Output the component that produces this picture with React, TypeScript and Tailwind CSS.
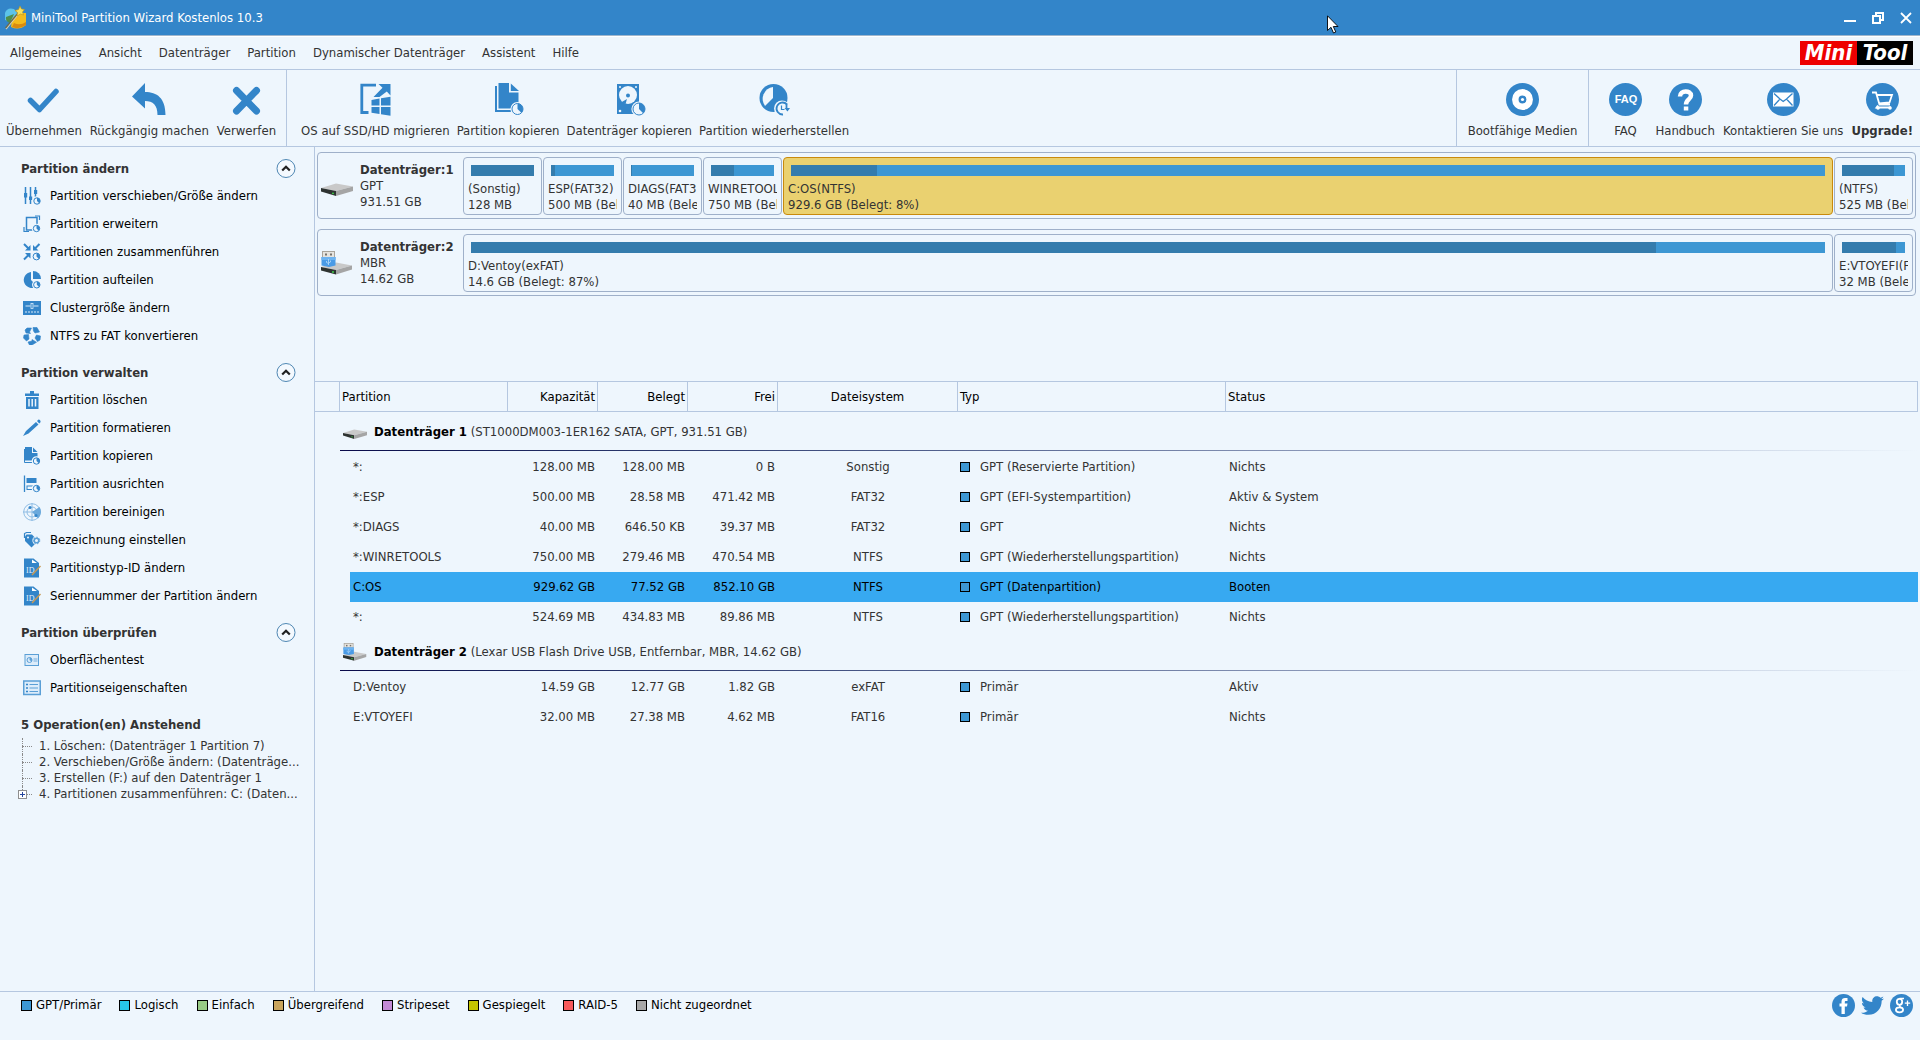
import React, { ReactNode } from "react";
import { FaTwitter } from "react-icons/fa";

const BLUE = "#3385c9";
const PAGE = "#eef6fd";

/* ---------- shared drawings ---------- */

function PieBadge({ cx, cy, r }: { cx: number; cy: number; r: number }) {
  return (
    <g>
      <circle cx={cx} cy={cy} r={r + 1.6} fill={PAGE} />
      <circle cx={cx} cy={cy} r={r} fill={PAGE} stroke={BLUE} strokeWidth="1" />
      <path
        d={`M${cx} ${cy}V${cy - r}A${r} ${r} 0 0 1 ${cx + r * 0.7} ${cy + r * 0.7}Z`}
        fill={BLUE}
      />
    </g>
  );
}

function HardDisk({ className }: { className: string }) {
  return (
    <svg viewBox="0 0 32 13" className={className} aria-hidden="true">
      <path d="M0 5L15 0.5L32 3.5L15 8Z" fill="#c9c9c9" />
      <path d="M0 5L15 8V13L0 8.5Z" fill="#2e3331" />
      <path d="M15 8L32 3.5V8L15 13Z" fill="#a5a5a5" />
      <circle cx="12" cy="10.3" r="0.9" fill="#3fe04a" />
    </svg>
  );
}

function UsbDisk({ className }: { className: string }) {
  return (
    <svg viewBox="0 0 32 24" className={className} aria-hidden="true">
      <path d="M0 16L15 11.5L31 14.5L15 19Z" fill="#c9c9c9" />
      <path d="M0 16L15 19V23.5L0 19.5Z" fill="#2e3331" />
      <path d="M15 19L31 14.5V18.5L15 23.5Z" fill="#a5a5a5" />
      <circle cx="12" cy="21" r="0.9" fill="#3fe04a" />
      <rect x="1.5" y="0.5" width="12" height="6" fill="#e6e4df" stroke="#a9a49b" />
      <rect x="4" y="2.5" width="2" height="2" fill="#77736c" />
      <rect x="9" y="2.5" width="2" height="2" fill="#77736c" />
      <path d="M0.5 6H14.5V14.5L8 16L0.5 14.5Z" fill="#4a9be6" />
      <path d="M0.5 6H14.5V9H0.5Z" fill="#6db3f0" />
      <path d="M7.5 8V14M5.5 10V11.5L7.5 12.5M9.5 9.5V11L7.5 12" stroke="#b5dafa" fill="none" strokeWidth="0.8" />
    </svg>
  );
}

function Round({ children }: { children: ReactNode }) {
  return (
    <svg viewBox="0 0 33 33" className="size-[33px]" aria-hidden="true">
      <circle cx="16.5" cy="16.5" r="16.5" fill={BLUE} />
      {children}
    </svg>
  );
}

/* ---------- toolbar icons ---------- */

const tool: Record<string, ReactNode> = {
  check: (
    <svg viewBox="0 0 33 33" className="size-[33px]" aria-hidden="true">
      <path d="M3.5 17.5L12.5 26.5L29 8.5" fill="none" stroke={BLUE} strokeWidth="5.5" strokeLinecap="round" strokeLinejoin="round" />
    </svg>
  ),
  undo: (
    <svg viewBox="0 0 34 33" className="h-[33px] w-[34px]" aria-hidden="true">
      <path d="M0 13.5L13 0V9C25 9 33.5 15 33.5 32H25.5C25.5 22 21 18 13 18V25.5Z" fill={BLUE} />
    </svg>
  ),
  discard: (
    <svg viewBox="0 0 33 33" className="size-[33px]" aria-hidden="true">
      <path d="M6.5 7.5L26.5 28M26.5 7.5L6.5 28" fill="none" stroke={BLUE} strokeWidth="7" strokeLinecap="round" />
    </svg>
  ),
  migrate: (
    <svg viewBox="0 0 33 33" className="size-[33px]" aria-hidden="true">
      <path d="M17 2.2H2.8V29.5H9.5" fill="none" stroke={BLUE} strokeWidth="2.8" />
      <path d="M19.5 1H31.5V12.5L27.8 8.5L20.5 14L14.5 14L23.5 4.8Z" fill={BLUE} />
      <path d="M12.5 17L20.5 15.5V22.5H12.5ZM22 15.3L31.5 13.8V22.5H22ZM12.5 24H20.5V31L12.5 29.8ZM22 24H31.5V32.7L22 31.2Z" fill={BLUE} />
    </svg>
  ),
  copyPartition: (
    <svg viewBox="0 0 33 33" className="size-[33px]" aria-hidden="true">
      <path d="M6.5 0H17V9.5H26.5V25.5H6.5Z" fill={BLUE} />
      <path d="M18.8 0.5L27 8H18.8Z" fill={BLUE} />
      <path d="M4 3V28H22" fill="none" stroke={BLUE} strokeWidth="2" />
      <PieBadge cx={25.5} cy={26} r={5.5} />
    </svg>
  ),
  copyDisk: (
    <svg viewBox="0 0 33 33" className="size-[33px]" aria-hidden="true">
      <rect x="4" y="1" width="22" height="30" fill={BLUE} />
      <circle cx="15" cy="12" r="9" fill={PAGE} />
      <circle cx="15" cy="12.5" r="2" fill={BLUE} />
      <path d="M7 20L14 16L12.5 21Z" fill={BLUE} />
      <circle cx="7" cy="4" r="1" fill={PAGE} />
      <circle cx="23" cy="4" r="1" fill={PAGE} />
      <circle cx="7" cy="28" r="1.3" fill={PAGE} />
      <PieBadge cx={26} cy={26} r={6} />
    </svg>
  ),
  recover: (
    <svg viewBox="0 0 33 33" className="size-[33px]" aria-hidden="true">
      <circle cx="15.5" cy="15" r="14" fill={BLUE} />
      <path d="M15 4V15L7 23A12 12 0 0 1 15 4Z" fill={PAGE} />
      <circle cx="24" cy="25.5" r="8" fill={PAGE} />
      <path d="M29 21.5A6 6 0 1 0 25 31.5" fill="none" stroke={BLUE} strokeWidth="1.8" />
      <path d="M26.5 25H32L29.5 28.5Z" fill={BLUE} />
      <path d="M23.5 22.5V26.5H26.5" fill="none" stroke={BLUE} strokeWidth="1.2" />
      <path d="M28.5 20.5V25" stroke={BLUE} strokeWidth="1.8" />
    </svg>
  ),
  disc: (
    <Round>
      <circle cx="16.5" cy="16.5" r="7.2" fill="none" stroke="#fff" strokeWidth="6.5" />
      <circle cx="16.5" cy="16.5" r="1.6" fill="#fff" />
    </Round>
  ),
  faq: (
    <Round>
      <text x="17" y="20" textAnchor="middle" fill="#fff" fontSize="11" fontWeight="700" fontFamily="Liberation Sans, sans-serif">FAQ</text>
    </Round>
  ),
  help: (
    <Round>
      <path d="M11 13.5C11 7 22 7 22 12.5C22 16.5 17 16.5 17 21.5" fill="none" stroke="#fff" strokeWidth="4.5" />
      <rect x="14.8" y="23.5" width="4.5" height="4" fill="#fff" />
    </Round>
  ),
  mail: (
    <Round>
      <rect x="6" y="9.5" width="20.5" height="14" fill="#fff" />
      <path d="M7 10.5L13 16L16.2 18.5L19.5 16L25.5 10.5M7 22.5L13 16M25.5 22.5L19.5 16" fill="none" stroke={BLUE} strokeWidth="1.3" />
    </Round>
  ),
  cart: (
    <Round>
      <path d="M6 9.5H10L13.5 21.5H24M10.5 12H26L23.5 19.5L13 20.5M12 22.5L10.5 24.5H25" fill="none" stroke="#fff" strokeWidth="1.8" />
      <circle cx="12" cy="25" r="1.8" fill="#fff" />
      <circle cx="24" cy="25" r="1.8" fill="#fff" />
    </Round>
  ),
};

/* ---------- sidebar icons ---------- */

function Small({ children }: { children: ReactNode }) {
  return (
    <svg viewBox="0 0 18 18" className="size-[18px] shrink-0" aria-hidden="true">
      {children}
    </svg>
  );
}

const idIcon = (
  <svg viewBox="0 0 18 20" className="h-5 w-[18px] shrink-0" aria-hidden="true">
    <path d="M1 0.5H10.5L16 5V19.5H1Z" fill={BLUE} />
    <path d="M9 1.5L14 5H9Z" fill="#fff" />
    <text x="3" y="15" fill="#e4f0fb" fontSize="8" fontFamily="Liberation Serif, serif">ID</text>
    <path d="M9 17L17.5 8" stroke="#c79a55" strokeWidth="1.5" />
  </svg>
);

const side: Record<string, ReactNode> = {
  sliders: (
    <Small>
      <path d="M2.5 0V17M7.5 0V17M12.5 0V10" stroke={BLUE} strokeWidth="1.5" />
      <path d="M1 6H4.2V10.5H1ZM6 9.5H9.2V13H6ZM11 3H14.2V7H11Z" fill={BLUE} />
      <PieBadge cx={14} cy={14} r={3.2} />
    </Small>
  ),
  extend: (
    <Small>
      <path d="M3.5 2.5H14V15H3.5Z" fill="none" stroke={BLUE} strokeWidth="1.5" />
      <path d="M12 1H16.5V5M1 12V16.5H6" fill="none" stroke={BLUE} strokeWidth="1.2" />
      <PieBadge cx={13.5} cy={13.5} r={3.2} />
    </Small>
  ),
  merge: (
    <Small>
      <path d="M7.5 2V7.5H2ZM10 2V7.5H15.5ZM7.5 15.5V10H2Z" fill={BLUE} />
      <path d="M1 1L6 6M16.5 1L11.5 6M1 16.5L6 11.5" stroke={BLUE} strokeWidth="2" />
      <PieBadge cx={13.5} cy={13.5} r={3.4} />
    </Small>
  ),
  split: (
    <Small>
      <path d="M8 1A8 8 0 1 0 14 15L8 9Z" fill={BLUE} />
      <path d="M10 0A8 8 0 0 1 18 8H10Z" fill={BLUE} />
      <PieBadge cx={13.8} cy={13.8} r={3.2} />
    </Small>
  ),
  cluster: (
    <Small>
      <rect x="0" y="2" width="18" height="14" fill={BLUE} />
      <path d="M2.5 7H7.5M10.5 7H15.5" stroke="#d8eafa" />
      <rect x="8" y="4.5" width="2" height="5" fill="none" stroke="#d8eafa" strokeWidth="0.8" />
      <path d="M2 13H16" stroke="#d8eafa" strokeDasharray="2 1" />
    </Small>
  ),
  convert: (
    <Small>
      <path d="M4 1H8.5L6.5 5L7.5 6.5L3 6L2 3ZM10 0.5H14L16.500 5L12 6L10.500 4ZM1 8L5.500 7.500L6 12L3.500 14L0.500 11ZM13.500 8L17.500 9L17 13L14.500 14.500L12 11ZM5 15L9 14V12.500L13.500 15.200L9 18H6.500Z" fill={BLUE} stroke={BLUE} strokeWidth="0.6" />
    </Small>
  ),
  trash: (
    <Small>
      <path d="M2 2.5H16V5H2ZM7 0H11V3H7ZM3 6H15.5V18H3Z" fill={BLUE} />
      <path d="M6 8V15.5M9.2 8V15.5M12.5 8V15.5" stroke={PAGE} strokeWidth="1.5" />
    </Small>
  ),
  pencil: (
    <Small>
      <path d="M3 12L13 3L15.5 5.5L5.5 14.5L0 17ZM14 2L15.5 0.5Q18 1 17.5 3.2L16.2 4.5Z" fill={BLUE} />
    </Small>
  ),
  copy: (
    <Small>
      <path d="M2 0H9V6H14.5V13.5H2Z" fill={BLUE} />
      <path d="M10 0.5L14.5 5H10Z" fill={BLUE} />
      <path d="M1.5 2V15.5H12" fill="none" stroke={BLUE} />
      <PieBadge cx={13.5} cy={14} r={3.2} />
    </Small>
  ),
  align: (
    <Small>
      <path d="M1.5 0.5V17" stroke={BLUE} strokeWidth="1.3" />
      <rect x="3.5" y="3" width="10" height="5" fill={BLUE} />
      <rect x="4" y="11" width="8" height="3.5" fill="none" stroke={BLUE} />
      <PieBadge cx={13.5} cy={13.5} r={3.2} />
    </Small>
  ),
  radar: (
    <Small>
      <circle cx="9" cy="9" r="8.3" fill="none" stroke="#8fbde4" strokeWidth="1" />
      <circle cx="9" cy="9" r="5" fill="none" stroke="#8fbde4" strokeWidth="1" />
      <path d="M9 0V18M0 9H18" stroke="#8fbde4" strokeWidth="1" />
      <path d="M9 9L16.5 4A9 9 0 0 1 15 15.5Z" fill="#6ba9dc" />
      <circle cx="7" cy="4.5" r="1.5" fill={BLUE} />
      <circle cx="13" cy="12.5" r="1.5" fill={BLUE} />
    </Small>
  ),
  tag: (
    <Small>
      <path d="M2 5.5L3.5 3.5H9L15 10L8.5 16.5L2 10Z" fill={BLUE} />
      <path d="M1.5 7V2.5L3.5 1.5H8" fill="none" stroke={BLUE} strokeWidth="1.2" />
      <circle cx="5" cy="6.5" r="1" fill={PAGE} />
      <circle cx="13.5" cy="9.5" r="4.2" fill={PAGE} />
      <circle cx="13.5" cy="9.5" r="2.3" fill="none" stroke="#5a9fd6" strokeWidth="1.6" />
      <circle cx="13.5" cy="9.5" r="3.3" fill="none" stroke="#5a9fd6" strokeWidth="1" strokeDasharray="1.5 1.5" />
    </Small>
  ),
  id: idIcon,
  surface: (
    <Small>
      <rect x="2" y="3.5" width="13.5" height="11" fill="#dcecfa" stroke="#5a9fd6" />
      <circle cx="6.5" cy="9" r="2.5" fill="none" stroke="#5a9fd6" />
      <path d="M6.5 9V6.5A2.5 2.5 0 0 1 8.5 10.5Z" fill="#5a9fd6" />
      <rect x="10.5" y="7" width="4" height="4" fill="#a9cdec" />
    </Small>
  ),
  props: (
    <Small>
      <rect x="0.75" y="2" width="16.5" height="13.5" fill="#dcecfa" stroke="#5a9fd6" strokeWidth="1.5" />
      <path d="M3 5.5H5M3 9H5M3 12.5H5" stroke={BLUE} strokeWidth="1.6" />
      <path d="M6.5 5.5H15M6.5 9H15M6.5 12.5H15" stroke="#5a9fd6" />
    </Small>
  ),
};

/* ---------- data ---------- */

const menu = ["Allgemeines", "Ansicht", "Datenträger", "Partition", "Dynamischer Datenträger", "Assistent", "Hilfe"];

const groups = [
  {
    title: "Partition ändern",
    items: [
      ["sliders", "Partition verschieben/Größe ändern"],
      ["extend", "Partition erweitern"],
      ["merge", "Partitionen zusammenführen"],
      ["split", "Partition aufteilen"],
      ["cluster", "Clustergröße ändern"],
      ["convert", "NTFS zu FAT konvertieren"],
    ],
  },
  {
    title: "Partition verwalten",
    items: [
      ["trash", "Partition löschen"],
      ["pencil", "Partition formatieren"],
      ["copy", "Partition kopieren"],
      ["align", "Partition ausrichten"],
      ["radar", "Partition bereinigen"],
      ["tag", "Bezeichnung einstellen"],
      ["id", "Partitionstyp-ID ändern"],
      ["id", "Seriennummer der Partition ändern"],
    ],
  },
  {
    title: "Partition überprüfen",
    items: [
      ["surface", "Oberflächentest"],
      ["props", "Partitionseigenschaften"],
    ],
  },
];

const pending = [
  "1. Löschen: (Datenträger 1 Partition 7)",
  "2. Verschieben/Größe ändern: (Datenträge...",
  "3. Erstellen (F:) auf den Datenträger 1",
  "4. Partitionen zusammenführen: C: (Daten...",
];

type Part = { name: string; info: string; used: number; wide?: boolean; selected?: boolean };

const disks: { title: string; scheme: string; size: string; usb?: boolean; parts: Part[] }[] = [
  {
    title: "Datenträger:1",
    scheme: "GPT",
    size: "931.51 GB",
    parts: [
      { name: "(Sonstig)", info: "128 MB", used: 100 },
      { name: "ESP(FAT32)", info: "500 MB (Bel", used: 6 },
      { name: "DIAGS(FAT3", info: "40 MB (Bele", used: 2 },
      { name: "WINRETOOL", info: "750 MB (Bel", used: 37 },
      { name: "C:OS(NTFS)", info: "929.6 GB (Belegt: 8%)", used: 8.3, wide: true, selected: true },
      { name: "(NTFS)", info: "525 MB (Bel", used: 83 },
    ],
  },
  {
    title: "Datenträger:2",
    scheme: "MBR",
    size: "14.62 GB",
    usb: true,
    parts: [
      { name: "D:Ventoy(exFAT)", info: "14.6 GB (Belegt: 87%)", used: 87.5, wide: true },
      { name: "E:VTOYEFI(F", info: "32 MB (Bele", used: 86 },
    ],
  },
];

const tableGroups = [
  {
    name: "Datenträger 1",
    detail: "(ST1000DM003-1ER162 SATA, GPT, 931.51 GB)",
    usb: false,
    rows: [
      ["*:", "128.00 MB", "128.00 MB", "0 B", "Sonstig", "GPT (Reservierte Partition)", "Nichts"],
      ["*:ESP", "500.00 MB", "28.58 MB", "471.42 MB", "FAT32", "GPT (EFI-Systempartition)", "Aktiv & System"],
      ["*:DIAGS", "40.00 MB", "646.50 KB", "39.37 MB", "FAT32", "GPT", "Nichts"],
      ["*:WINRETOOLS", "750.00 MB", "279.46 MB", "470.54 MB", "NTFS", "GPT (Wiederherstellungspartition)", "Nichts"],
      ["C:OS", "929.62 GB", "77.52 GB", "852.10 GB", "NTFS", "GPT (Datenpartition)", "Booten"],
      ["*:", "524.69 MB", "434.83 MB", "89.86 MB", "NTFS", "GPT (Wiederherstellungspartition)", "Nichts"],
    ],
  },
  {
    name: "Datenträger 2",
    detail: "(Lexar USB Flash Drive USB, Entfernbar, MBR, 14.62 GB)",
    usb: true,
    rows: [
      ["D:Ventoy", "14.59 GB", "12.77 GB", "1.82 GB", "exFAT", "Primär", "Aktiv"],
      ["E:VTOYEFI", "32.00 MB", "27.38 MB", "4.62 MB", "FAT16", "Primär", "Nichts"],
    ],
  },
];

const legend = [
  ["bg-[#3d97d3]", "GPT/Primär"],
  ["bg-[#27c8ea]", "Logisch"],
  ["bg-[#98cb85]", "Einfach"],
  ["bg-[#c9a45c]", "Übergreifend"],
  ["bg-[#c48ad6]", "Stripeset"],
  ["bg-[#c4c400]", "Gespiegelt"],
  ["bg-[#f75b5b]", "RAID-5"],
  ["bg-[#a8a8a8]", "Nicht zugeordnet"],
];

/* ---------- parts of the window ---------- */

function ToolButton({ icon, label, bold }: { icon: string; label: string; bold?: boolean }) {
  return (
    <button type="button" className="flex min-w-11 flex-col items-center gap-[7px] whitespace-nowrap">
      {tool[icon]}
      <span className={bold ? "font-bold leading-4" : "leading-4"}>{label}</span>
    </button>
  );
}

function TitleBar() {
  return (
    <header className="flex h-9 items-center border-b border-[#9fb6cd] bg-[#3385c9] pl-1 text-white">
      <svg viewBox="0 0 24 26" className="h-[26px] w-6" aria-hidden="true">
        <path d="M1 8Q3 2 10 4L14 9L8 17L1 15Z" fill="#5cc3ea" />
        <path d="M2 12L10 9L6 18Q1 16 2 12Z" fill="#4f8f4c" />
        <path d="M8 14Q13 7 22 8V20Q15 26 7 22Z" fill="#f3bb1c" />
        <path d="M10 18Q16 21 22 17V20Q15 25 8 22Z" fill="#d98a10" />
        <path d="M2 24L16 7" stroke="#d9d2b8" strokeWidth="1.2" />
        <path d="M1.5 23L15 7" stroke="#6d6a4a" strokeWidth="1.2" />
        <path d="M16 1L17.5 4L20.5 4.5L18.5 7L19.5 10L16.5 9L13 11L13.5 7.5L11 5.5L14.5 4.5Z" fill="#f7e05a" stroke="#b98f17" strokeWidth="0.6" />
      </svg>
      <h1 className="ml-[3px] flex-1">MiniTool Partition Wizard Kostenlos 10.3</h1>
      <div className="flex items-center gap-4 pr-2">
        <button type="button" aria-label="Minimieren" className="flex h-4 w-3 items-end pb-1">
          <span className="h-0.5 w-full bg-white" />
        </button>
        <button type="button" aria-label="Wiederherstellen">
          <svg viewBox="0 0 12 12" className="size-3" fill="none" stroke="#fff" strokeWidth="2" aria-hidden="true">
            <rect x="1" y="4" width="7" height="7" />
            <path d="M4 3V1H11V8H9" />
          </svg>
        </button>
        <button type="button" aria-label="Schließen">
          <svg viewBox="0 0 12 12" className="size-3" stroke="#fff" strokeWidth="1.8" aria-hidden="true">
            <path d="M1 1L11 11M11 1L1 11" />
          </svg>
        </button>
      </div>
    </header>
  );
}

function Sidebar() {
  return (
    <aside className="w-[315px] shrink-0 border-r border-[#b5c7e0] pt-3">
      {groups.map((g) => (
        <section key={g.title} className="mb-[13px]">
          <div className="mb-[3px] flex h-5 items-center justify-between pr-[18px] pl-[21px]">
            <h2 className="font-bold">{g.title}</h2>
            <button type="button" aria-label={g.title + " einklappen"}>
              <svg viewBox="0 0 20 20" className="size-5" fill="none" aria-hidden="true">
                <circle cx="10" cy="9.5" r="9" fill="#f4f9fe" stroke="#4f87b3" />
                <path d="M6.2 11.5L10 7.7L13.8 11.5" stroke="#222" strokeWidth="2.2" />
              </svg>
            </button>
          </div>
          <ul>
            {g.items.map(([icon, label]) => (
              <li key={label}>
                <button type="button" className="flex h-7 w-full items-center gap-[9px] pl-[23px] text-left text-black">
                  {side[icon]}
                  <span>{label}</span>
                </button>
              </li>
            ))}
          </ul>
        </section>
      ))}
      <h2 className="mb-[3px] flex h-5 items-center pl-[21px] font-bold">5 Operation(en) Anstehend</h2>
      <ul className="mr-2 ml-[18px]">
        {pending.map((p, i) => (
          <li key={p} className="flex h-4 items-center leading-4">
            <span className="relative mr-[7px] h-full w-[14px] shrink-0">
              <span className={i < 3 ? "absolute top-0 left-1 h-full border-l border-dotted border-[#8a8a8a]" : "absolute top-0 left-1 h-1 border-l border-dotted border-[#8a8a8a]"} />
              <span className="absolute top-2 right-0 left-1 border-t border-dotted border-[#8a8a8a]" />
              {i === 3 && (
                <button type="button" aria-label="Aufklappen" className="absolute top-1 left-0 flex size-[9px] items-center justify-center border border-[#8f8f8f] bg-white">
                  <svg viewBox="0 0 5 5" className="size-[5px]" stroke="#24459c" aria-hidden="true">
                    <path d="M0 2.5H5M2.5 0V5" />
                  </svg>
                </button>
              )}
            </span>
            <span className="whitespace-nowrap">{p}</span>
          </li>
        ))}
      </ul>
    </aside>
  );
}

function PartitionBox({ p }: { p: Part }) {
  return (
    <button
      type="button"
      className={
        "flex h-[58px] min-w-0 flex-col items-stretch overflow-hidden rounded-[4px] border px-1 pt-[7px] text-left " +
        (p.wide ? "flex-1 " : "w-[79px] shrink-0 ") +
        (p.selected ? "border-[#c98a0c] bg-[#ead170]" : "border-[#9fb0c9]")
      }
    >
      <span className="mx-[3px] mb-[5px] flex h-[11px] shrink-0 bg-[#3d97d3]">
        <span className="bg-[#347cad]" style={{ width: p.used + "%" }} />
      </span>
      <span className="overflow-hidden leading-4 whitespace-nowrap">{p.name}</span>
      <span className="overflow-hidden leading-4 whitespace-nowrap">{p.info}</span>
    </button>
  );
}

function DiskMap() {
  return (
    <div className="flex h-[234px] flex-col gap-[10px] pt-[5px] pr-1 pl-0.5">
      {disks.map((d) => (
        <section key={d.title} className="flex h-[67px] items-start rounded-[4px] border border-[#9fb0c9] pr-0.5">
          <div className="flex w-[145px] shrink-0 items-start pl-[3px]">
            <span className="flex h-full w-[39px] pt-[21px]">
              {d.usb ? <UsbDisk className="h-6 w-8" /> : <HardDisk className="mt-[9px] h-[13px] w-8" />}
            </span>
            <div className="pt-[9px] leading-4">
              <h3 className="font-bold">{d.title}</h3>
              <p>{d.scheme}</p>
              <p>{d.size}</p>
            </div>
          </div>
          <div className="flex min-w-0 flex-1 gap-px pt-1">
            {d.parts.map((p) => (
              <PartitionBox key={p.name} p={p} />
            ))}
          </div>
        </section>
      ))}
    </div>
  );
}

const th = "h-[31px] border-y border-r border-[#b5c7e0] px-0.5 font-normal text-black";

function PartitionTable() {
  return (
    <div className="pr-0.5">
      <table className="w-full table-fixed border-separate border-spacing-0">
        <colgroup>
          <col className="w-[25px]" />
          <col className="w-[10px]" />
          <col className="w-[158px]" />
          <col className="w-[90px]" />
          <col className="w-[90px]" />
          <col className="w-[90px]" />
          <col className="w-[180px]" />
          <col className="w-[268px]" />
          <col />
        </colgroup>
        <thead>
          <tr>
            <th className={th} aria-label="Auswahl" />
            <th className={th + " text-left"} colSpan={2}>Partition</th>
            <th className={th + " text-right"}>Kapazität</th>
            <th className={th + " text-right"}>Belegt</th>
            <th className={th + " text-right"}>Frei</th>
            <th className={th + " text-center"}>Dateisystem</th>
            <th className={th + " text-left"}>Typ</th>
            <th className={th + " text-left"}>Status</th>
          </tr>
        </thead>
        {tableGroups.map((g) => (
          <tbody key={g.name}>
            <tr>
              <td />
              <th colSpan={8} scope="rowgroup" className="h-10 text-left align-top font-normal">
                <span className="flex h-[38px] items-center pt-0.5 pl-[3px]">
                  {g.usb ? <UsbDisk className="h-[18px] w-6" /> : <HardDisk className="mt-1 h-[10px] w-6" />}
                  <span className="ml-[7px]">
                    <b className="text-black">{g.name}</b> {g.detail}
                  </span>
                </span>
                <span className="block h-px bg-linear-to-r from-[#0a0a4a] to-[#eef6fd]" />
              </th>
            </tr>
            {g.rows.map((r, i) => {
              const sel = r[0] === "C:OS";
              const cell = sel ? "h-[30px] bg-[#37a9f1] text-black" : "h-[30px]";
              return (
                <tr key={i}>
                  <td />
                  <td />
                  <td className={cell + " pl-[3px]"}>{r[0]}</td>
                  <td className={cell + " pr-[3px] text-right"}>{r[1]}</td>
                  <td className={cell + " pr-[3px] text-right"}>{r[2]}</td>
                  <td className={cell + " pr-[3px] text-right"}>{r[3]}</td>
                  <td className={cell + " text-center"}>{r[4]}</td>
                  <td className={cell + " pl-0.5"}>
                    <span className="flex items-center gap-[10px]">
                      <span className="size-[10px] border border-black bg-[#3d97d3]" />
                      {r[5]}
                    </span>
                  </td>
                  <td className={cell + " pl-[3px]"}>{r[6]}</td>
                </tr>
              );
            })}
          </tbody>
        ))}
      </table>
    </div>
  );
}

function Footer() {
  return (
    <footer className="flex h-[49px] items-start justify-between border-t border-[#b5c7e0] pr-[7px] pl-[21px]">
      <ul className="flex gap-[18px] pt-[5px] text-black">
        {legend.map(([color, label]) => (
          <li key={label} className="flex items-center gap-1 leading-4">
            <span className={"size-[11px] border border-black " + color} />
            {label}
          </li>
        ))}
      </ul>
      <div className="flex items-center gap-[6px] pt-0.5">
        <a href="#facebook" aria-label="Facebook">
          <svg viewBox="0 0 23 23" className="size-[23px]" aria-hidden="true">
            <circle cx="11.5" cy="11.5" r="11.5" fill={BLUE} />
            <path d="M9.5 20V12.5H7.5V9.5H9.5V7.5C9.5 5 11 4 13 4H15.5V7H14C13 7 12.8 7.5 12.8 8.2V9.5H15.5L15 12.5H12.8V20Z" fill="#fff" />
          </svg>
        </a>
        <a href="#twitter" aria-label="Twitter">
          <FaTwitter className="size-[23px] text-[#3385c9]" />
        </a>
        <a href="#google" aria-label="Google+">
          <svg viewBox="0 0 23 23" className="size-[23px]" fill="none" stroke="#fff" aria-hidden="true">
            <circle cx="11.5" cy="11.5" r="11.5" fill={BLUE} stroke="none" />
            <ellipse cx="9.5" cy="7.8" rx="2.7" ry="3" strokeWidth="1.8" />
            <path d="M9.5 4.5H14M10 11Q9 12.5 11 13.5" strokeWidth="1.4" />
            <ellipse cx="9.5" cy="15.8" rx="3.6" ry="2.5" strokeWidth="1.8" />
            <path d="M17.5 6.5V12M14.8 9.2H20.2" strokeWidth="1.3" />
          </svg>
        </a>
      </div>
    </footer>
  );
}

export default function App() {
  return (
    <div className="relative flex min-h-screen flex-col bg-[#eef6fd] font-['DejaVu_Sans_Condensed','Noto_Sans',sans-serif] text-[13px] leading-4 text-[#333]">
      <TitleBar />
      <div className="flex h-[33px] items-center justify-between border-t border-white pr-[7px] pl-[10px]">
        <nav className="flex gap-[17px]">
          {menu.map((m) => (
            <button key={m} type="button">{m}</button>
          ))}
        </nav>
        <div className="flex h-6 text-[22px] leading-6 font-bold text-white italic">
          <span className="w-[57px] bg-[#ee0000] text-center">Mini</span>
          <span className="w-14 bg-black text-center">Tool</span>
        </div>
      </div>
      <div className="flex h-[78px] border-y border-[#b5c7e0]">
        <div className="flex gap-2 border-r border-[#b5c7e0] pt-[13px] pr-[10px] pl-1.5">
          <ToolButton icon="check" label="Übernehmen" />
          <ToolButton icon="undo" label="Rückgängig machen" />
          <ToolButton icon="discard" label="Verwerfen" />
        </div>
        <div className="flex flex-1 gap-[7px] pt-[13px] pl-[14px]">
          <ToolButton icon="migrate" label="OS auf SSD/HD migrieren" />
          <ToolButton icon="copyPartition" label="Partition kopieren" />
          <ToolButton icon="copyDisk" label="Datenträger kopieren" />
          <ToolButton icon="recover" label="Partition wiederherstellen" />
        </div>
        <div className="flex border-x border-[#b5c7e0] px-[11px] pt-[13px]">
          <ToolButton icon="disc" label="Bootfähige Medien" />
        </div>
        <div className="flex gap-2 pt-[13px] pr-[7px] pl-[14px]">
          <ToolButton icon="faq" label="FAQ" />
          <ToolButton icon="help" label="Handbuch" />
          <ToolButton icon="mail" label="Kontaktieren Sie uns" />
          <ToolButton icon="cart" label="Upgrade!" bold />
        </div>
      </div>
      <div className="flex flex-1">
        <Sidebar />
        <main className="min-w-0 flex-1">
          <DiskMap />
          <PartitionTable />
        </main>
      </div>
      <Footer />
      <svg viewBox="0 0 12 19" className="absolute top-[15px] left-[1327px] h-[19px] w-3" aria-hidden="true">
        <path d="M0.5 0.8V15.5L4 12.3L6.5 18L8.8 17L6.3 11.5H11Z" fill="#fff" stroke="#000" strokeWidth="0.9" />
      </svg>
    </div>
  );
}
